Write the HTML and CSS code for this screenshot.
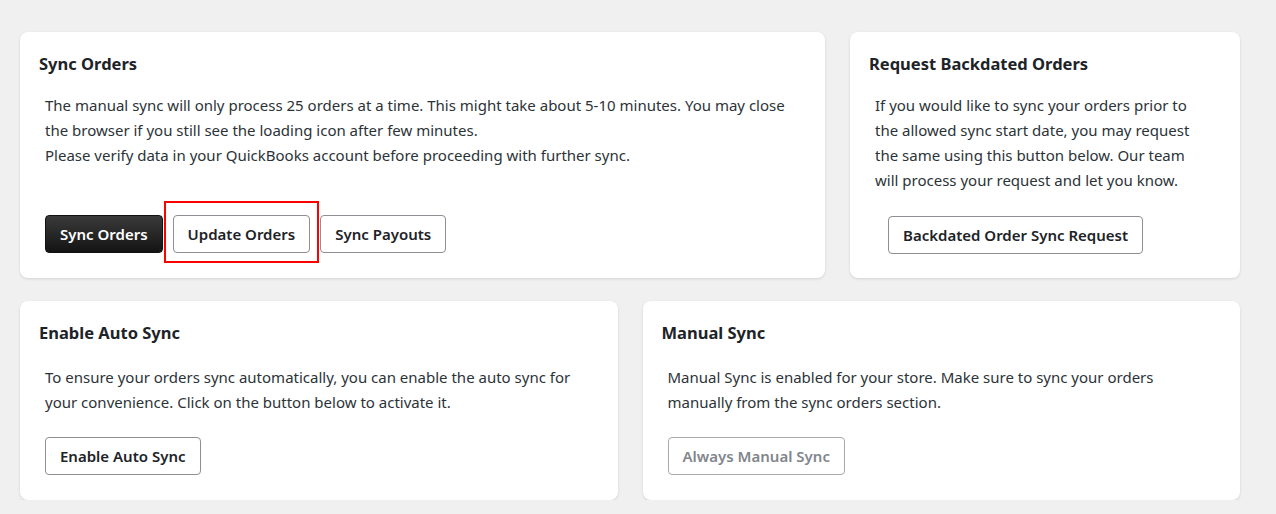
FILE: index.html
```html
<!DOCTYPE html>
<html lang="en">
<head>
    <meta charset="UTF-8">
    <meta name="viewport" content="width=device-width, initial-scale=1.0">
    <title>Sync Settings</title>
    <link rel="stylesheet" href="styles.css">
</head>
<body>
    <div class="sync-wrap">
        <!-- Top row -->
        <div class="sync-row row-top">
            <div class="card">
                <h2>Sync Orders</h2>
                <p>The manual sync will only process 25 orders at a time. This might take about 5-10 minutes. You may close the browser if you still see the loading icon after few minutes.<br>
                Please verify data in your QuickBooks account before proceeding with further sync.</p>
                <div class="btn-group">
                    <button class="btn btn-dark">Sync Orders</button>
                    <span class="highlight">
                        <button class="btn">Update Orders</button>
                    </span>
                    <button class="btn">Sync Payouts</button>
                </div>
            </div>
            <div class="card">
                <h2>Request Backdated Orders</h2>
                <p class="narrow">If you would like to sync your orders prior to the allowed sync start date, you may request the same using this button below. Our team will process your request and let you know.</p>
                <div class="btn-group indent">
                    <button class="btn">Backdated Order Sync Request</button>
                </div>
            </div>
        </div>

        <!-- Bottom row -->
        <div class="sync-row row-bottom">
            <div class="card">
                <h2>Enable Auto Sync</h2>
                <p class="spaced">To ensure your orders sync automatically, you can enable the auto sync for your convenience. Click on the button below to activate it.</p>
                <div class="btn-group">
                    <button class="btn">Enable Auto Sync</button>
                </div>
            </div>
            <div class="card">
                <h2>Manual Sync</h2>
                <p class="spaced">Manual Sync is enabled for your store. Make sure to sync your orders manually from the sync orders section.</p>
                <div class="btn-group">
                    <button class="btn" disabled>Always Manual Sync</button>
                </div>
            </div>
        </div>
    </div>
</body>
</html>
```

FILE: styles.css
```css
body {
    font-family: 'Noto Sans', sans-serif;
    background: #f0f0f1;
    color: #3c434a;
    margin: 0;
    padding: 0;
}
.sync-wrap {
    padding: 32px 36px 0 20px;
    display: flex;
    flex-direction: column;
    gap: 23px;
}
.sync-row {
    display: grid;
    gap: 25px;
}
.row-top {
    grid-template-columns: 805px 1fr;
}
.row-bottom {
    grid-template-columns: 1fr 1fr;
}
.card {
    background: #fff;
    border-radius: 8px;
    box-shadow: 0 1px 3px rgba(0, 0, 0, 0.12);
    padding: 20px 19px 24px;
}
.card h2 {
    margin: 0;
    font-size: 16.5px;
    font-weight: bold;
    color: #1d2327;
    line-height: 24px;
}
.card p {
    margin: 17px 0 0 6px;
    font-size: 15px;
    line-height: 25px;
    color: #2c3338;
}
.card p.spaced {
    margin-top: 20px;
}
.card p.narrow {
    margin-right: 20px;
}
.btn-group {
    display: flex;
    align-items: center;
    gap: 10px;
    margin: 22px 0 0 6px;
}
.row-top .btn-group {
    margin-top: 47px;
}
.row-bottom .card {
    padding-bottom: 25px;
}
.btn-group.indent {
    margin-left: 19px;
    margin-top: 23px;
}
.btn {
    font-family: inherit;
    font-size: 15px;
    font-weight: 600;
    color: #1d2327;
    background: #fff;
    border: 1px solid #8c8f94;
    border-radius: 4px;
    height: 38px;
    padding: 0 14px;
    cursor: pointer;
}
.btn-dark {
    background: linear-gradient(#3a3a3a, #141414);
    color: #fff;
    border-color: #111;
}
.btn:disabled {
    color: #82868b;
    border-color: #a7aaad;
    cursor: default;
}
/* red outline drawn around the Update Orders button */
.highlight {
    position: relative;
    display: inline-flex;
}
.highlight::after {
    content: "";
    position: absolute;
    left: -9px;
    right: -9px;
    top: -14px;
    bottom: -10px;
    border: 2px solid #f00;
    pointer-events: none;
}
```
